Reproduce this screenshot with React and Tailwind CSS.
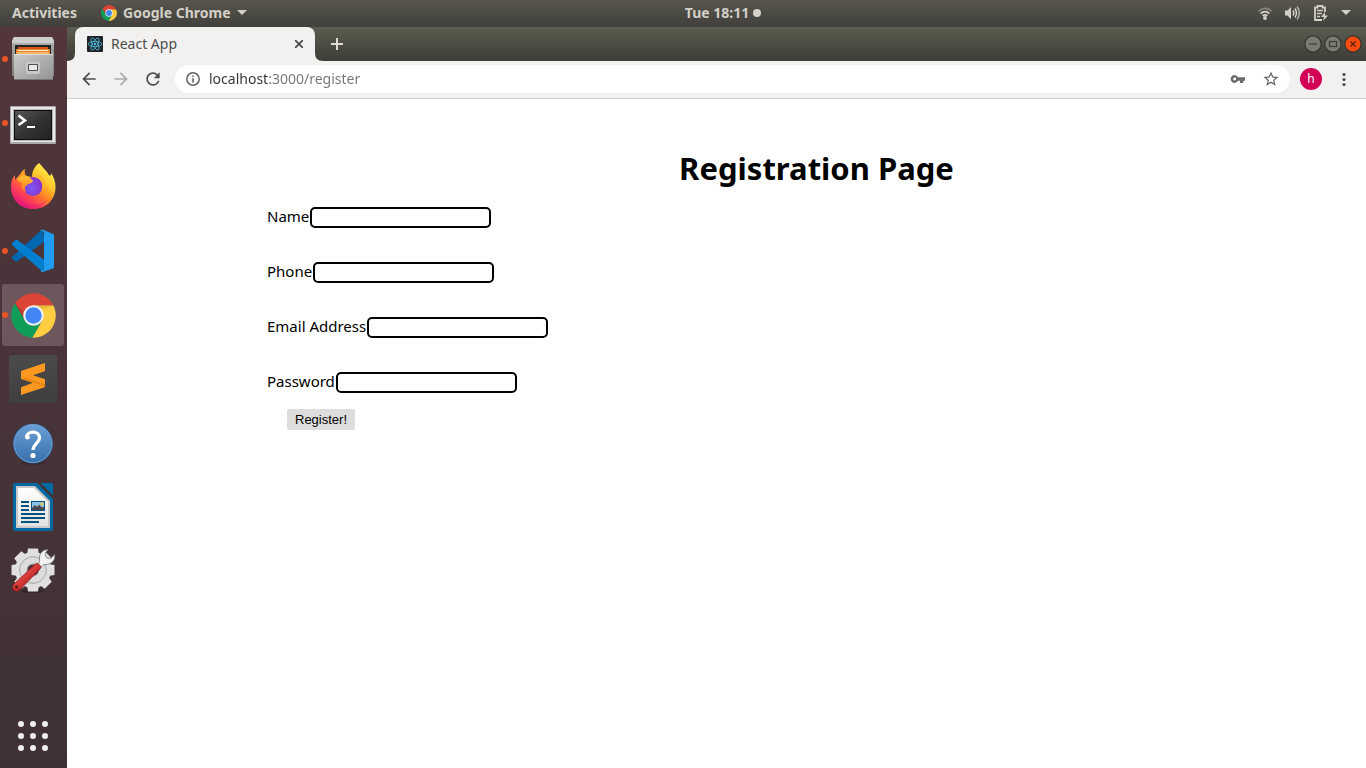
import React from "react";

function ChromeLogo({ className }) {
  return (
    <svg viewBox="-22.5 -22.5 45 45" className={className} aria-hidden="true">
      <path d="M-18.6-12.2A22.3 22.3 0 0 1 19.9-10H0L-8.7 5Z" fill="#db4437" />
      <path d="M19.9-10A22.3 22.3 0 0 1-1.3 22.2L8.7 5 0-10Z" fill="#ffcd40" />
      <path d="M-1.3 22.2A22.3 22.3 0 0 1-18.6-12.2L-8.7 5H8.7Z" fill="#0f9d58" />
      <path d="M0-10H19.9L6-5Z" fill="#c9a02c" opacity=".35" />
      <path d="M-18.6-12.2-8.7 5-10-4Z" fill="#3e2723" opacity=".25" />
      <circle r="10.3" fill="#f1f1f1" />
      <circle r="8.2" fill="#4285f4" />
    </svg>
  );
}

function FilesIcon() {
  return (
    <svg viewBox="0 0 48 48" className="size-12" aria-hidden="true">
      <defs>
        <linearGradient id="fBody" x1="0" y1="0" x2="0" y2="1">
          <stop offset="0" stopColor="#d4d4d4" />
          <stop offset=".2" stopColor="#a5a5a5" />
          <stop offset="1" stopColor="#777" />
        </linearGradient>
        <linearGradient id="fFront" x1="0" y1="0" x2="1" y2="1">
          <stop offset="0" stopColor="#c9c9c9" />
          <stop offset=".45" stopColor="#b2b2b2" />
          <stop offset="1" stopColor="#929292" />
        </linearGradient>
      </defs>
      <path d="M5 2H43L45 6V41H44V45H5V41H3V6Z" fill="url(#fBody)" />
      <path d="M5 2H43L45 6V8H3V6Z" fill="#cfcfcf" />
      <path d="M6 10H42V20H6Z" fill="#262626" />
      <path d="M9 12H39V15H9Z" fill="#d3541b" />
      <path d="M7 14H41V20H7Z" fill="#e8862b" />
      <path d="M9 15H39V16H9Z" fill="#fbe7c8" />
      <path d="M8 17H40V19H8Z" fill="#f3b567" />
      <path d="M5 19H44V45H5Z" fill="url(#fFront)" />
      <path d="M5 19H44V20H5Z" fill="#ddd" />
      <path d="M5 44H44V45H5Z" fill="#777" />
      <rect x="17" y="27" width="14" height="12" rx="2" fill="#c9c9c9" />
      <rect x="19" y="29" width="10" height="7" rx="1" fill="#4c4c4c" />
      <rect x="20" y="30" width="8" height="5" fill="#e8e8e8" />
    </svg>
  );
}

function TerminalIcon() {
  return (
    <svg viewBox="0 0 48 48" className="size-12" aria-hidden="true">
      <defs>
        <linearGradient id="tScreen" x1="0" y1="0" x2="1" y2="1">
          <stop offset="0" stopColor="#585858" />
          <stop offset=".5" stopColor="#333" />
          <stop offset="1" stopColor="#222" />
        </linearGradient>
      </defs>
      <rect x="1" y="7" width="46" height="38" rx="1" fill="#a9a9a9" />
      <rect x="2" y="8" width="44" height="35" fill="#e6e6e6" />
      <rect x="4" y="10" width="40" height="32" fill="#b9b9b9" />
      <rect x="5" y="11" width="38" height="30" fill="#0c0c0c" />
      <rect x="6" y="12" width="36" height="28" fill="url(#tScreen)" />
      <path d="M9.500 16.500 16 21.500 9.500 26" fill="none" stroke="#fff" strokeWidth="2.500" />
      <path d="M18 28H26" stroke="#fff" strokeWidth="2" />
    </svg>
  );
}

function FirefoxIcon() {
  return (
    <svg viewBox="0 0 48 48" className="size-12" aria-hidden="true">
      <defs>
        <linearGradient id="ffBody" x1=".85" y1=".1" x2=".2" y2=".95">
          <stop offset="0" stopColor="#fff44f" />
          <stop offset=".3" stopColor="#ffc22c" />
          <stop offset=".5" stopColor="#ff8a1f" />
          <stop offset=".75" stopColor="#ff4055" />
          <stop offset="1" stopColor="#e3157f" />
        </linearGradient>
        <radialGradient id="ffGlobe" cx=".4" cy=".6" r=".7">
          <stop offset="0" stopColor="#7c55f5" />
          <stop offset="1" stopColor="#8a2fc9" />
        </radialGradient>
        <linearGradient id="ffFox" x1="0" y1="0" x2="0" y2="1">
          <stop offset="0" stopColor="#ffc02e" />
          <stop offset="1" stopColor="#ff7a25" />
        </linearGradient>
      </defs>
      <path d="M30 0C33 3 35 6 38 9C39 11 40 12 41 13C42 12 42 11 42 10C45 14 46.500 19 46.500 24C46.500 37 37 46 24 46C11 46 2 36 2 24C2 19 3 15 6 12V17L12 10C13 8 14 7 16 6C15 9 16 12 18 13L23 14C23 8 26 3 30 0Z" fill="url(#ffBody)" />
      <circle cx="24" cy="23.500" r="9.500" fill="url(#ffGlobe)" />
      <path d="M24 14C29 13 33 15 34 18L31 17C34 20 34 25 32 28C35 25 37 20 35 16C33 13 29 11 24 14Z" fill="#ffb52b" />
      <path d="M12 13C17 11 22 16 24 17.500C24 20 21 20 18 22C16 23 15 25 17 29C13 27 12 23 13 20C11 19 9 18 8 16Z" fill="url(#ffFox)" />
      <path d="M8 33C15 43 29 45 38 37C34 44 28 46 24 46C16 46 10 40 8 33Z" fill="#e3157f" opacity=".35" />
    </svg>
  );
}

function CodeIcon() {
  return (
    <svg viewBox="0 0 48 48" className="size-12" aria-hidden="true">
      <path d="M3 30 33 2.500 36 14 8 34.500Q7 35 6 34L3 31.500Q2 30.500 3 30Z" fill="#0067b0" />
      <path d="M3 16.500 6.500 13Q7.500 12.500 8.500 13L36 33.500 34 45 3 18Q2.500 17 3 16.500Z" fill="#007fcf" />
      <path d="M33.500 2.500 44 7Q45 7.500 45 8.500V39.500Q45 41 44 41.500L33.500 45Q32 45 31 43.500C33 44.500 35 43 35 41V6.500C35 4.500 33 3 31 4Q32 2.500 33.500 2.500Z" fill="#1f9cf0" />
    </svg>
  );
}

function SublimeIcon() {
  return (
    <svg viewBox="0 0 48 48" className="size-12" aria-hidden="true">
      <defs>
        <linearGradient id="stBg" x1="0" y1="0" x2="0" y2="1">
          <stop offset="0" stopColor="#4b4b4b" />
          <stop offset="1" stopColor="#3f3f3f" />
        </linearGradient>
      </defs>
      <rect width="48" height="48" rx="2.500" fill="url(#stBg)" />
      <path d="M12 40V32.200L24 27.800 12.500 24.300Q12 24 12 23.500V16.500Q12 16 12.500 15.800L36 8V16L24 20.300 35.500 24Q36 24.200 36 25V31.500Q36 32 35.500 32.200Z" fill="#ff9820" />
      <path d="M12 23.800 24 27.800 33 31 35.500 32.200Q36 32 36 31.500V29L17 22.500Z" fill="#e07f0c" opacity=".6" />
    </svg>
  );
}

function HelpIcon() {
  return (
    <svg viewBox="0 0 48 48" className="size-12" aria-hidden="true">
      <defs>
        <linearGradient id="hBg" x1="0" y1="0" x2="0" y2="1">
          <stop offset="0" stopColor="#6b9fd5" />
          <stop offset="1" stopColor="#3870ad" />
        </linearGradient>
      </defs>
      <ellipse cx="24" cy="44" rx="13" ry="2" fill="#000" opacity=".15" />
      <circle cx="24" cy="24.500" r="20" fill="#245a93" />
      <circle cx="24" cy="24.500" r="19" fill="url(#hBg)" stroke="#6f9fd0" strokeWidth="1" />
      <path d="M17.500 18.500C17.500 11.500 30.500 11 30.500 19C30.500 24 24 25 24 31" fill="none" stroke="#fff" strokeWidth="3.200" />
      <circle cx="18.500" cy="18.200" r="2.300" fill="#fff" />
      <circle cx="24" cy="36.500" r="2.600" fill="#fff" />
    </svg>
  );
}

function WriterIcon() {
  return (
    <svg viewBox="0 0 48 48" className="size-12" aria-hidden="true">
      <defs>
        <linearGradient id="wPage" x1="0" y1="0" x2="0" y2="1">
          <stop offset="0" stopColor="#fff" />
          <stop offset="1" stopColor="#e2e2e2" />
        </linearGradient>
      </defs>
      <path d="M6 0H28L44 16V46Q44 48 42 48H6Q4 48 4 46V2Q4 0 6 0Z" fill="#0369a3" />
      <path d="M31.500 0H43Q44 0 44 1V12.500Z" fill="#0369a3" />
      <path d="M7 3H26L41 18V45H7Z" fill="#c9c9c9" />
      <path d="M9 5H25L39 19V43H9Z" fill="url(#wPage)" />
      <path d="M12 19H20M12 23H20M12 27H20M12 31H36M12 35H36M12 39H30" stroke="#04527f" strokeWidth="2" />
      <rect x="22" y="18" width="14" height="10" fill="#04527f" />
      <rect x="23" y="19" width="12" height="8" fill="#8cc4ea" />
      <circle cx="33" cy="21" r="1.500" fill="#f5c342" />
      <path d="M23 27V25L26 22 28 24 30 21.500 33 24.500 35 23.500V27Z" fill="#4a4a4a" />
    </svg>
  );
}

function SettingsIcon() {
  const teeth = [0, 45, 90, 135, 180, 225, 270, 315];
  return (
    <svg viewBox="0 0 48 48" className="size-12" aria-hidden="true">
      <defs>
        <linearGradient id="sRed" x1="0" y1="0" x2="1" y2="1">
          <stop offset=".3" stopColor="#ef5350" />
          <stop offset=".7" stopColor="#b71c1c" />
        </linearGradient>
      </defs>
      <ellipse cx="24" cy="44" rx="12" ry="2" fill="#000" opacity=".2" />
      <g fill="#e0e0e0">
        {teeth.map((a) => (
          <path key={a} d="M18 8 19 1.500H29L30 8Z" transform={`rotate(${a} 24 23)`} />
        ))}
        <circle cx="24" cy="23" r="18" />
      </g>
      <circle cx="24" cy="23" r="13.500" fill="#d2d2d2" stroke="#b0b0b0" />
      <circle cx="24" cy="23" r="12" fill="#dcdcdc" />
      <circle cx="24" cy="23" r="6" fill="#4a3438" stroke="#a8a8a8" />
      <path d="M27 19C30 17 31 15 30.500 11C30.500 6 34 2.500 39 2.500L36 6.500 37.500 11 42 11.500 45.500 7.500C47 13 42 18 36 17.500C34 17.500 33 19 31 22Z" fill="#f1f1f1" stroke="#777" strokeWidth=".8" />
      <path d="M27 16.500Q29.500 16 31.500 19Q32.500 20.500 30.500 22.500L11 42.500Q8 45.500 4.500 43Q2 40 5 37Z" fill="url(#sRed)" stroke="#8e1414" strokeWidth=".8" />
      <circle cx="7.500" cy="40" r="1.700" fill="#5b1a1c" />
    </svg>
  );
}

function ReactFavicon() {
  return (
    <svg viewBox="0 0 16 16" className="size-4" aria-hidden="true">
      <rect width="16" height="16" rx="1" fill="#20232a" />
      <g fill="none" stroke="#53c1de" strokeWidth=".8">
        <ellipse cx="8" cy="8" rx="6.800" ry="2.600" />
        <ellipse cx="8" cy="8" rx="6.800" ry="2.600" transform="rotate(60 8 8)" />
        <ellipse cx="8" cy="8" rx="6.800" ry="2.600" transform="rotate(120 8 8)" />
      </g>
      <circle cx="8" cy="8" r="1.300" fill="#53c1de" />
    </svg>
  );
}

const dockApps = [
  { name: "Files", icon: <FilesIcon />, running: true },
  { name: "Terminal", icon: <TerminalIcon />, running: true },
  { name: "Firefox", icon: <FirefoxIcon /> },
  { name: "Visual Studio Code", icon: <CodeIcon />, running: true },
  { name: "Google Chrome", icon: <ChromeLogo className="size-[45px]" />, running: true, active: true },
  { name: "Sublime Text", icon: <SublimeIcon /> },
  { name: "Help", icon: <HelpIcon /> },
  { name: "LibreOffice Writer", icon: <WriterIcon /> },
  { name: "Settings", icon: <SettingsIcon /> },
];

function TopBar() {
  return (
    <header className="grid h-[27px] shrink-0 grid-cols-[1fr_auto_1fr] items-center bg-linear-to-b from-[#58564e] to-[#403f3a] px-3 pb-0.5 text-sm font-bold text-[#d3d0c8]">
      <div className="flex items-center gap-6">
        <button type="button">Activities</button>
        <button type="button" className="flex items-center gap-1.5">
          <ChromeLogo className="size-4" />
          <span>Google Chrome</span>
          <svg viewBox="0 0 10 5" className="h-[5px] w-2.5" aria-hidden="true">
            <path d="M0 0H10L5 5Z" fill="currentColor" />
          </svg>
        </button>
      </div>
      <button type="button" className="ml-20 flex items-center gap-1">
        <span>Tue 18:11</span>
        <span className="size-2 rounded-full bg-[#d3d0c8]" />
      </button>
      <button type="button" aria-label="System menu" className="flex items-center justify-end gap-3 pr-[3px]">
        <svg viewBox="0 0 16 16" className="size-4" aria-hidden="true">
          <g fill="none" stroke="currentColor" strokeWidth="1.800">
            <path d="M1.500 6.500C5 2.200 11 2.200 14.500 6.500" opacity=".4" />
            <path d="M3.700 8.800C6 6 10 6 12.300 8.800" />
            <path d="M5.800 11C7 9.600 9 9.600 10.200 11" />
          </g>
          <circle cx="8" cy="13" r="1.900" fill="currentColor" />
        </svg>
        <svg viewBox="0 0 16 16" className="size-4" aria-hidden="true">
          <path d="M0 5.500H2.500L6 2V14L2.500 10.500H0Z" fill="currentColor" />
          <g fill="none" stroke="currentColor" strokeWidth="1.500">
            <path d="M8 5.500Q9.800 8 8 10.500" />
            <path d="M10 3.500Q13 8 10 12.500" />
            <path d="M12 1.500Q16.800 8 12 14.500" opacity=".75" />
          </g>
        </svg>
        <svg viewBox="0 0 16 16" className="size-4" aria-hidden="true">
          <path d="M9 15H2V2.500H4.500V1H9.500V2.500H12V7" fill="none" stroke="currentColor" strokeWidth="1.800" />
          <path d="M4 5.500H10M4 8.500H9M4 11.500H7" stroke="currentColor" strokeWidth="1.500" />
          <path d="M12 7 8 12H11L10 16 15 10.500H12Z" fill="currentColor" />
        </svg>
        <svg viewBox="0 0 10 5" className="h-[5px] w-2.5" aria-hidden="true">
          <path d="M0 0H10L5 5Z" fill="currentColor" />
        </svg>
      </button>
    </header>
  );
}

function Dock() {
  return (
    <nav aria-label="Dock" className="flex w-[67px] shrink-0 flex-col bg-linear-to-b from-[#52363b] to-[#3e3135]">
      <ul>
        {dockApps.map((app) => (
          <li key={app.name} className="flex h-16 items-center pl-0.5">
            <button
              type="button"
              aria-label={app.name}
              className={`relative flex size-[62px] items-center justify-center rounded-[3px] ${app.active ? "bg-[#6e575c]" : ""}`}
            >
              {app.running && <span className="absolute left-0 size-1.5 rounded-full bg-[#e95420]" />}
              {app.icon}
            </button>
          </li>
        ))}
      </ul>
      <button type="button" aria-label="Show applications" className="mt-auto flex h-16 w-[66px] items-center justify-center">
        <svg viewBox="0 0 30 30" className="size-[30px]" fill="#f0eeee" aria-hidden="true">
          {[3, 15, 27].map((y) => [3, 15, 27].map((x) => <circle key={`${x}-${y}`} cx={x} cy={y} r="3" />))}
        </svg>
      </button>
    </nav>
  );
}

function TabStrip() {
  return (
    <div className="flex h-[34px] items-center justify-between bg-linear-to-b from-[#5c5d50] to-[#3d3c37]">
      <div className="flex h-full items-center">
        <svg viewBox="0 0 8 8" className="size-2 self-end" aria-hidden="true">
          <path d="M8 0V8H0Q8 8 8 0Z" fill="#f2f1f0" />
        </svg>
        <div className="flex h-full w-60 items-center gap-2 rounded-t-lg bg-[#f2f1f0] px-3 text-sm text-[#4c4c4c]">
          <ReactFavicon />
          <span className="flex-1">React App</span>
          <button type="button" aria-label="Close tab">
            <svg viewBox="0 0 8 8" className="size-2" aria-hidden="true">
              <path d="M0 0 8 8M8 0 0 8" stroke="#45484c" strokeWidth="1.700" />
            </svg>
          </button>
        </div>
        <svg viewBox="0 0 8 8" className="size-2 self-end" aria-hidden="true">
          <path d="M0 0V8H8Q0 8 0 0Z" fill="#f2f1f0" />
        </svg>
        <button type="button" aria-label="New tab" className="ml-2">
          <svg viewBox="0 0 12 12" className="size-3" aria-hidden="true">
            <path d="M6 0V12M0 6H12" stroke="#dfdbd2" strokeWidth="2" />
          </svg>
        </button>
      </div>
      <div className="flex items-center gap-0.5 pr-1">
        <button type="button" aria-label="Minimize">
          <svg viewBox="0 0 18 18" className="size-[18px]" aria-hidden="true">
            <circle cx="9" cy="9" r="8.200" fill="#7c7b73" stroke="#35342f" strokeWidth="1.200" />
            <path d="M5 9H13" stroke="#3c3b37" strokeWidth="1.200" />
          </svg>
        </button>
        <button type="button" aria-label="Maximize">
          <svg viewBox="0 0 18 18" className="size-[18px]" aria-hidden="true">
            <circle cx="9" cy="9" r="8.200" fill="#7c7b73" stroke="#35342f" strokeWidth="1.200" />
            <rect x="5.500" y="6.500" width="7" height="5" fill="none" stroke="#3c3b37" strokeWidth="1.200" />
          </svg>
        </button>
        <button type="button" aria-label="Close">
          <svg viewBox="0 0 18 18" className="size-[18px]" aria-hidden="true">
            <circle cx="9" cy="9" r="8.200" fill="#fa4b0f" stroke="#35342f" strokeWidth="1.200" />
            <path d="M6.500 6.500 11.500 11.500M11.500 6.500 6.500 11.500" stroke="#5a2310" strokeWidth="1.400" />
          </svg>
        </button>
      </div>
    </div>
  );
}

function Toolbar() {
  return (
    <div className="flex h-[38px] items-center border-b border-[#cfcecd] bg-[#f2f1f0] pr-3.5 pb-px pl-3">
      <div className="flex items-center gap-3 pr-3">
        <button type="button" aria-label="Back">
          <svg viewBox="0 0 24 24" className="size-5" fill="#4a4c50" aria-hidden="true">
            <path d="M20 11H7.830l5.590-5.590L12 4l-8 8 8 8 1.410-1.410L7.830 13H20z" />
          </svg>
        </button>
        <button type="button" aria-label="Forward" disabled>
          <svg viewBox="0 0 24 24" className="size-5" fill="#acacac" aria-hidden="true">
            <path d="M12 4l-1.410 1.410L16.170 11H4v2h12.170l-5.580 5.590L12 20l8-8z" />
          </svg>
        </button>
        <button type="button" aria-label="Reload">
          <svg viewBox="0 0 24 24" className="size-5" fill="#4a4c50" aria-hidden="true">
            <path d="M17.650 6.350A7.958 7.958 0 0 0 12 4c-4.420 0-7.990 3.580-7.990 8s3.570 8 7.990 8c3.730 0 6.840-2.550 7.730-6h-2.080A5.990 5.990 0 0 1 12 18c-3.310 0-6-2.690-6-6s2.690-6 6-6c1.660 0 3.140.69 4.220 1.780L13 11h7V4z" />
          </svg>
        </button>
      </div>
      <div className="flex h-7 flex-1 items-center gap-2 rounded-full bg-white px-2.5">
        <button type="button" aria-label="View site information">
          <svg viewBox="0 0 16 16" className="size-4" aria-hidden="true">
            <circle cx="8" cy="8" r="6.200" fill="none" stroke="#5f6368" strokeWidth="1.500" />
            <path d="M8 7.200V11.500M8 4.500V6" stroke="#5f6368" strokeWidth="1.600" />
          </svg>
        </button>
        <input
          type="text"
          aria-label="Address"
          defaultValue="localhost:3000/register"
          className="h-5 min-w-0 flex-1 bg-linear-[90deg,#333333_60px,#757575_60px] bg-clip-text text-sm text-transparent outline-none"
        />
        <button type="button" aria-label="Saved passwords" className="mr-2">
          <svg viewBox="0 0 24 24" className="size-4" fill="#6a6a6a" aria-hidden="true">
            <path d="M12 9.500A5.800 5.800 0 1 0 12 14.500H15V18H20V14.500H22.500V9.500ZM7 14.200A2.200 2.200 0 1 1 7 9.800 2.200 2.200 0 0 1 7 14.200Z" />
          </svg>
        </button>
        <button type="button" aria-label="Bookmark this page">
          <svg viewBox="0 0 24 24" className="size-[18px]" fill="#5f6368" aria-hidden="true">
            <path d="M22 9.240l-7.190-.62L12 2 9.190 8.630 2 9.240l5.460 4.730L5.820 21 12 17.270 18.180 21l-1.630-7.030zM12 15.400l-3.760 2.270 1-4.280-3.320-2.880 4.380-.38L12 6.100l1.710 4.040 4.380.38-3.320 2.880 1 4.280z" />
          </svg>
        </button>
      </div>
      <button type="button" aria-label="Profile" className="ml-2.5 flex size-[22px] items-center justify-center rounded-full bg-[#d10056] text-xs text-white">
        h
      </button>
      <button type="button" aria-label="Customize and control" className="ml-3.5">
        <svg viewBox="0 0 16 16" className="size-4" fill="#4a4c50" aria-hidden="true">
          <circle cx="8" cy="3.500" r="1.600" />
          <circle cx="8" cy="8.500" r="1.600" />
          <circle cx="8" cy="13.500" r="1.600" />
        </svg>
      </button>
    </div>
  );
}

const fields = [
  { id: "name", label: "Name", type: "text" },
  { id: "phone", label: "Phone", type: "tel" },
  { id: "email", label: "Email Address", type: "email" },
  { id: "password", label: "Password", type: "password" },
];

function RegistrationPage() {
  return (
    <main className="flex-1 bg-white pt-12 pl-[200px] text-black">
      <h1 className="text-center text-[31px] leading-[42px] font-bold">Registration Page</h1>
      <form className="flex flex-col items-start pt-4" onSubmit={(e) => e.preventDefault()}>
        <div className="flex flex-col gap-[31px]">
          {fields.map((f) => (
            <div key={f.id} className="flex h-6 items-center">
              <label htmlFor={f.id} className="h-6 pr-px text-[15px] leading-[22px]">
                {f.label}
              </label>
              <input
                id={f.id}
                type={f.type}
                className="h-[21px] w-[181px] rounded-[5px] border-2 border-black bg-white px-px text-[13px] outline-none"
              />
            </div>
          ))}
        </div>
        <button
          type="submit"
          className="mt-[15px] ml-5 h-[21px] rounded-xs bg-[#dddddd] px-2 font-['Liberation_Sans',Arial,sans-serif] text-[13px] leading-[21px]"
        >
          Register!
        </button>
      </form>
    </main>
  );
}

export default function App() {
  return (
    <div className="flex min-h-screen flex-col font-['Noto_Sans',sans-serif]">
      <TopBar />
      <div className="flex flex-1">
        <Dock />
        <section className="flex min-w-0 flex-1 flex-col">
          <TabStrip />
          <Toolbar />
          <RegistrationPage />
        </section>
      </div>
    </div>
  );
}
